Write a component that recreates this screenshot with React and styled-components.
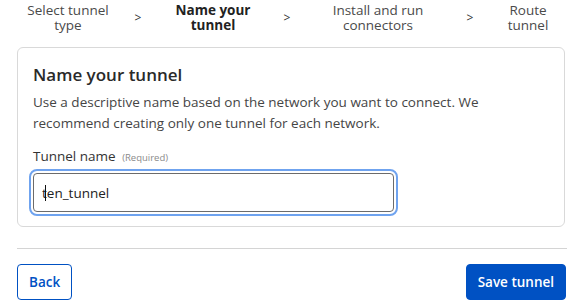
import React from "react";
import styled, { createGlobalStyle } from "styled-components";

const GlobalStyle = createGlobalStyle`
    html, body {
        margin: 0;
        padding: 0;
        background: #ffffff;
    }
    body {
        font-family: "Open Sans", "Noto Sans", sans-serif;
        color: #313131;
    }
`;

const steps = [
    { label: "Select tunnel\ntype", width: 110 },
    { label: "Name your\ntunnel", width: 120, active: true },
    { label: "Install and run\nconnectors", width: 154 },
    { label: "Route\ntunnel", width: 86 },
];

const chevronWidths = [30, 28, 30];

export default function App() {
    return (
        <>
            <GlobalStyle />
            <Page>
                <Stepper>
                    {steps.map((step, i) => (
                        <React.Fragment key={step.label}>
                            {i > 0 && <Chevron $width={chevronWidths[i - 1]}>&gt;</Chevron>}
                            <Step $active={step.active} $width={step.width}>
                                {step.label}
                            </Step>
                        </React.Fragment>
                    ))}
                </Stepper>

                <Card>
                    <Title>Name your tunnel</Title>
                    <Description>
                        Use a descriptive name based on the network you want to connect. We
                        recommend creating only one tunnel for each network.
                    </Description>
                    <Field>
                        <Label>
                            Tunnel name <Required>(Required)</Required>
                        </Label>
                        <InputWrap>
                            <Input defaultValue="ten_tunnel" />
                            <Caret />
                        </InputWrap>
                    </Field>
                </Card>

                <Divider />

                <Footer>
                    <Button>Back</Button>
                    <Button $primary>Save tunnel</Button>
                </Footer>
            </Page>
        </>
    );
}

const Page = styled.div`
    width: 582px;
    padding: 0 17px;
    box-sizing: border-box;
`;

const Stepper = styled.div`
    display: flex;
    align-items: center;
    margin-left: -4px;
    height: 47px;
    margin-top: -6px;
`;

const Step = styled.div`
    flex: none;
    width: ${(props) => props.$width}px;
    text-align: center;
    white-space: pre-line;
    font-size: 13.5px;
    line-height: 15px;
    font-weight: ${(props) => (props.$active ? 700 : 400)};
    color: ${(props) => (props.$active ? "#222222" : "#4a4a4a")};
`;

const Chevron = styled.span`
    flex: none;
    width: ${(props) => props.$width}px;
    text-align: center;
    font-size: 12px;
    color: #333333;
`;

const Card = styled.section`
    margin-top: 6px;
    width: 548px;
    border: 1px solid #d9d9d9;
    border-radius: 6px;
    padding: 16px 15px 14px;
    box-sizing: border-box;
`;

const Title = styled.h2`
    margin: 0;
    font-size: 17px;
    font-weight: 600;
    line-height: 22px;
    color: #2a2a2a;
`;

const Description = styled.p`
    margin: 6px 0 0;
    font-size: 13.5px;
    line-height: 21px;
    color: #454545;
`;

const Field = styled.div`
    margin-top: 14px;
`;

const Label = styled.label`
    display: block;
    font-size: 13.5px;
    line-height: 16px;
    color: #333333;
`;

const Required = styled.span`
    font-size: 9.5px;
    color: #8a8a8a;
    margin-left: 3px;
`;

const InputWrap = styled.div`
    position: relative;
    margin-top: 7px;
    width: 361px;
`;

const Input = styled.input`
    display: block;
    width: 100%;
    height: 39px;
    box-sizing: border-box;
    border: 1px solid #6b6b6b;
    border-radius: 4px;
    padding: 0 8px;
    font-family: inherit;
    font-size: 13.5px;
    color: #222222;
    background: #ffffff;
    outline: 2px solid #6fa3ef;
    outline-offset: 2px;
`;

const Caret = styled.span`
    position: absolute;
    left: 12px;
    top: 12px;
    width: 1px;
    height: 16px;
    background: #111111;
`;

const Divider = styled.hr`
    margin: 21px 0 0;
    width: 550px;
    border: 0;
    border-top: 1px solid #d4d4d4;
`;

const Footer = styled.div`
    display: flex;
    justify-content: space-between;
    width: 549px;
    margin-top: 15px;
`;

const Button = styled.button`
    height: 36px;
    padding: 0 11px;
    border-radius: 4px;
    font-family: inherit;
    font-size: 13.5px;
    font-weight: 600;
    border: 1px solid #0051c3;
    background: ${(props) => (props.$primary ? "#0051c3" : "#ffffff")};
    color: ${(props) => (props.$primary ? "#ffffff" : "#0051c3")};
`;
